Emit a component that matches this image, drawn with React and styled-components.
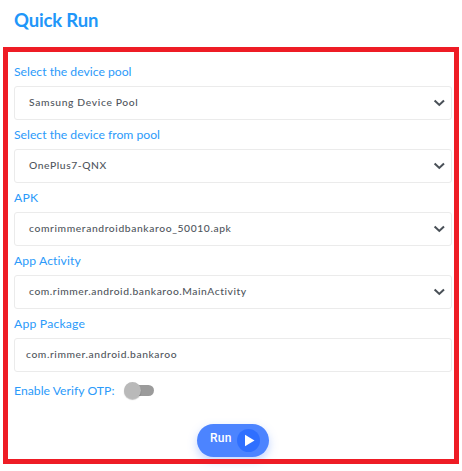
import React from 'react';
import styled, { createGlobalStyle } from 'styled-components';

const GlobalStyle = createGlobalStyle`
  * { box-sizing: border-box; }
  body {
    margin: 0;
    background: #fff;
    font-family: Lato, "Open Sans", sans-serif;
    font-variant-ligatures: none;
  }
`;

const Page = styled.main`
  width: 462px;
  height: 471px;
  overflow: hidden;
`;

const Title = styled.h1`
  margin: 0;
  height: 47px;
  padding: 8px 0 0 14px;
  font-size: 18.5px;
  line-height: 24px;
  font-weight: 700;
  letter-spacing: -0.15px;
  color: #2196f9;
`;

const Panel = styled.section`
  position: relative;
  display: flex;
  flex-direction: column;
  width: 456px;
  height: 417px;
  margin-left: 3px;
  padding: 10px 7px 0 11px;

  &::after {
    content: "";
    position: absolute;
    inset: 0;
    border: 5px solid #ee1c25;
    pointer-events: none;
  }
`;

const Label = styled.label`
  display: block;
  height: 29px;
  font-size: 12.2px;
  line-height: 29px;
  white-space: nowrap;
  letter-spacing: ${(p) => p.$spacing}px;
  color: #2b9afa;
`;

const Control = styled.div`
  display: flex;
  align-items: center;
  justify-content: space-between;
  height: 34px;
  padding: 0 6px 0 ${(p) => (p.$select ? 14 : 11)}px;
  border: 1px solid #ebebeb;
  border-radius: 3px;
`;

const Value = styled.span`
  margin-bottom: 2px;
  font-size: 10.3px;
  line-height: 16px;
  font-weight: 500;
  white-space: nowrap;
  letter-spacing: ${(p) => p.$spacing}px;
  color: #50565d;
`;

const Chevron = styled.svg`
  width: 12px;
  height: 8px;
  flex: none;
`;

const ToggleRow = styled.div`
  display: flex;
  align-items: center;
  gap: 9px;
  height: 38px;
`;

const ToggleLabel = styled(Label)`
  margin-bottom: 1px;
`;

const Switch = styled.span`
  display: flex;
  align-items: center;
  width: 30px;
  height: 11px;
  margin-top: -1px;
  border-radius: 6px;
  background: linear-gradient(to right, transparent 8px, #9b9b9b 8px);
`;

const Knob = styled.span`
  width: 17px;
  height: 17px;
  flex: none;
  border-radius: 50%;
  background: #b9b9b9;
  box-shadow: 0 1px 1px rgba(0, 0, 0, 0.25);
`;

const RunButton = styled.button`
  display: flex;
  align-items: center;
  justify-content: space-between;
  width: 72px;
  height: 33px;
  margin: 14px 0 0 183px;
  padding: 0 9.5px 0 13px;
  border: 0;
  border-radius: 17px;
  background: #4c84ff;
  box-shadow: 0 4px 10px rgba(76, 132, 255, 0.35);
  color: #fff;
  font-family: Roboto, "Liberation Sans", sans-serif;
  font-size: 12px;
  font-weight: 500;
`;

const RunText = styled.span`
  line-height: 16px;
  margin-bottom: 5px;
  letter-spacing: 0.3px;
`;

const PlayIcon = styled.svg`
  width: 23px;
  height: 23px;
  flex: none;
`;

const fields = [
  { label: 'Select the device pool', value: 'Samsung Device Pool', select: true, ls: 0, vs: 0.65 },
  { label: 'Select the device from pool', value: 'OnePlus7-QNX', select: true, ls: 0, vs: 0.58 },
  { label: 'APK', value: 'comrimmerandroidbankaroo_50010.apk', select: true, ls: 0.2, vs: 0.61 },
  { label: 'App Activity', value: 'com.rimmer.android.bankaroo.MainActivity', select: true, ls: 0.1, vs: 0.55 },
  { label: 'App Package', value: 'com.rimmer.android.bankaroo', select: false, ls: 0.2, vs: 0.58 },
];

export default function App() {
  return (
    <Page>
      <GlobalStyle />
      <Title>Quick Run</Title>
      <Panel>
        {fields.map((f) => (
          <React.Fragment key={f.label}>
            <Label $spacing={f.ls}>{f.label}</Label>
            <Control $select={f.select}>
              <Value $spacing={f.vs}>{f.value}</Value>
              {f.select && (
                <Chevron viewBox="0 0 12 8">
                  <path d="M1.6 1.6 L6.3 5.9 L11 1.6" fill="none" stroke="#495057" strokeWidth="2.1" />
                </Chevron>
              )}
            </Control>
          </React.Fragment>
        ))}
        <ToggleRow>
          <ToggleLabel $spacing={0.03}>Enable Verify OTP:</ToggleLabel>
          <Switch role="switch" aria-checked="false">
            <Knob />
          </Switch>
        </ToggleRow>
        <RunButton>
          <RunText>Run</RunText>
          <PlayIcon viewBox="0 0 23 23">
            <circle cx="11.5" cy="11.5" r="11.5" fill="#2f6fff" />
            <path d="M8 5.8 L17.5 11.5 L8 17.2 Z" fill="#fff" />
          </PlayIcon>
        </RunButton>
      </Panel>
    </Page>
  );
}
